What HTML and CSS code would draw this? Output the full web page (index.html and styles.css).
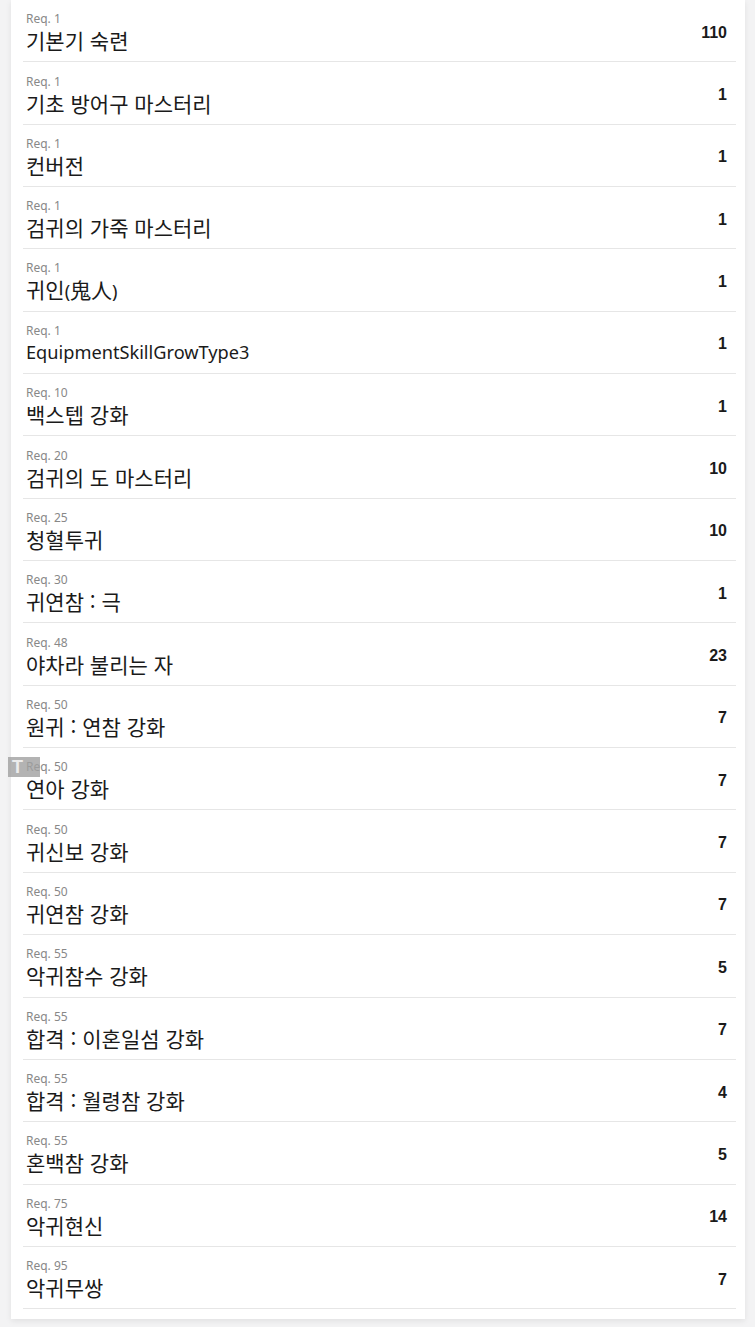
FILE: index.html
```html
<!DOCTYPE html>
<html lang="ko">
<head>
    <meta charset="UTF-8">
    <title>Skills</title>
    <link rel="stylesheet" href="styles.css">
</head>
<body>
    <div class="card">
        <ul class="skills">
            <li><div class="info"><span class="req">Req. 1</span><span class="name">기본기 숙련</span></div><span class="lv">110</span></li>
            <li><div class="info"><span class="req">Req. 1</span><span class="name">기초 방어구 마스터리</span></div><span class="lv">1</span></li>
            <li><div class="info"><span class="req">Req. 1</span><span class="name">컨버전</span></div><span class="lv">1</span></li>
            <li><div class="info"><span class="req">Req. 1</span><span class="name">검귀의 가죽 마스터리</span></div><span class="lv">1</span></li>
            <li><div class="info"><span class="req">Req. 1</span><span class="name">귀인<span class="latin">(</span>鬼人<span class="latin">)</span></span></div><span class="lv">1</span></li>
            <li><div class="info"><span class="req">Req. 1</span><span class="name latin">EquipmentSkillGrowType3</span></div><span class="lv">1</span></li>
            <li><div class="info"><span class="req">Req. 10</span><span class="name">백스텝 강화</span></div><span class="lv">1</span></li>
            <li><div class="info"><span class="req">Req. 20</span><span class="name">검귀의 도 마스터리</span></div><span class="lv">10</span></li>
            <li><div class="info"><span class="req">Req. 25</span><span class="name">청혈투귀</span></div><span class="lv">10</span></li>
            <li><div class="info"><span class="req">Req. 30</span><span class="name">귀연참 : 극</span></div><span class="lv">1</span></li>
            <li><div class="info"><span class="req">Req. 48</span><span class="name">야차라 불리는 자</span></div><span class="lv">23</span></li>
            <li><div class="info"><span class="req">Req. 50</span><span class="name">원귀 : 연참 강화</span></div><span class="lv">7</span></li>
            <li><div class="info"><span class="req">Req. 50</span><span class="name">연아 강화</span></div><span class="lv">7</span><span class="badge">T</span></li>
            <li><div class="info"><span class="req">Req. 50</span><span class="name">귀신보 강화</span></div><span class="lv">7</span></li>
            <li><div class="info"><span class="req">Req. 50</span><span class="name">귀연참 강화</span></div><span class="lv">7</span></li>
            <li><div class="info"><span class="req">Req. 55</span><span class="name">악귀참수 강화</span></div><span class="lv">5</span></li>
            <li><div class="info"><span class="req">Req. 55</span><span class="name">합격 : 이혼일섬 강화</span></div><span class="lv">7</span></li>
            <li><div class="info"><span class="req">Req. 55</span><span class="name">합격 : 월령참 강화</span></div><span class="lv">4</span></li>
            <li><div class="info"><span class="req">Req. 55</span><span class="name">혼백참 강화</span></div><span class="lv">5</span></li>
            <li><div class="info"><span class="req">Req. 75</span><span class="name">악귀현신</span></div><span class="lv">14</span></li>
            <li><div class="info"><span class="req">Req. 95</span><span class="name">악귀무쌍</span></div><span class="lv">7</span></li>
        </ul>
    </div>
</body>
</html>
```

FILE: styles.css
```css
*{
    padding: 0;
    margin: 0;
    box-sizing: border-box;
}
li{
    list-style: none;
}
body{
    background: #f3f3f4;
    font-family: "Noto Sans", "Noto Sans CJK KR", sans-serif;
    color: #222;
}
.card{
    width: 734px;
    margin: 0 10px 8px 11px;
    padding: 0 9px 10px 12px;
    background: #fff;
    box-shadow: 0 2px 6px rgba(0,0,0,0.08);
}
.skills li{
    position: relative;
    display: flex;
    justify-content: space-between;
    align-items: center;
    height: 62.35px;
    padding: 0 9px 0 3px;
    border-bottom: 1px solid #e6e6e6;
}
.info{
    display: flex;
    flex-direction: column;
    padding-top: 3px;
}
.req{
    font-size: 12px;
    line-height: 16px;
    color: #888;
}
.name{
    font-family: "Noto Sans CJK KR", sans-serif;
    font-size: 21px;
    line-height: 26px;
    color: #1a1a1a;
}
.latin{
    font-family: "Noto Sans", sans-serif;
    font-size: 18.2px;
}
.lv{
    font-family: "Liberation Sans", Arial, sans-serif;
    font-weight: bold;
    font-size: 16px;
    margin-top: 4px;
    color: #1a1a1a;
}
.badge{
    position: absolute;
    left: -15px;
    top: 9px;
    width: 32px;
    height: 20px;
    background: rgba(160,160,160,0.8);
    color: #ececec;
    font-family: "Liberation Sans", Arial, sans-serif;
    font-weight: bold;
    font-size: 18px;
    line-height: 20px;
    padding-left: 4px;
}
```
